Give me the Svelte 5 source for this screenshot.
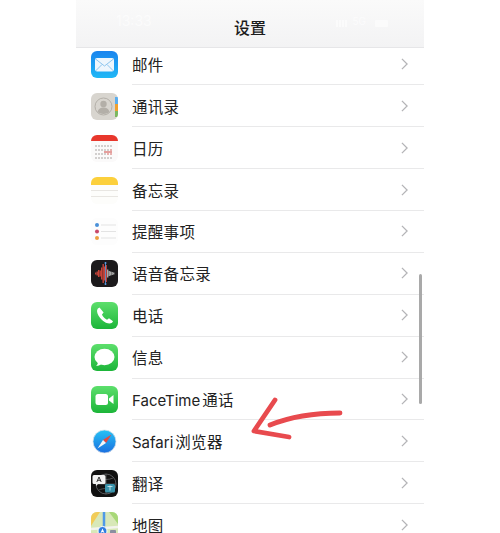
<script>
  const rows = [
    { icon: 'mail', label: '邮件' },
    { icon: 'contacts', label: '通讯录' },
    { icon: 'calendar', label: '日历' },
    { icon: 'notes', label: '备忘录' },
    { icon: 'reminders', label: '提醒事项' },
    { icon: 'voice', label: '语音备忘录' },
    { icon: 'phone', label: '电话' },
    { icon: 'messages', label: '信息' },
    { icon: 'facetime', latin: 'FaceTime', label: '通话' },
    { icon: 'safari', latin: 'Safari', label: '浏览器' },
    { icon: 'translate', label: '翻译' },
    { icon: 'maps', label: '地图' }
  ];

  // waveform bars for the voice memo icon
  const bars = [2, 4, 7, 6, 12, 19, 14, 17, 8, 5, 4, 3, 2];
  // dot grid for the calendar icon
  const dots = [];
  for (let y = 11; y <= 23; y += 4) {
    for (let x = 5; x <= 22; x += 3) dots.push({ x, y });
  }
</script>

<div class="phone">
  <header>
    <div class="status">
      <span class="time">13:33</span>
      <span class="signal">
        <i></i><i></i><i></i><i></i>
        <span class="net">5G</span>
        <span class="battery"></span>
      </span>
    </div>
    <h1>设置</h1>
  </header>

  <ul>
    {#each rows as row}
      <li>
        <svg class="icon" viewBox="0 0 27 27" width="27" height="27">
          <defs>
            <linearGradient id="blue" x1="0" y1="0" x2="0" y2="1">
              <stop offset="0" stop-color="#1a84ee" /><stop offset="1" stop-color="#20b8f6" />
            </linearGradient>
            <linearGradient id="green" x1="0" y1="0" x2="0" y2="1">
              <stop offset="0" stop-color="#5ddf6c" /><stop offset="1" stop-color="#1cb539" />
            </linearGradient>
            <linearGradient id="sky" x1="0" y1="0" x2="0" y2="1">
              <stop offset="0" stop-color="#27c2f5" /><stop offset="1" stop-color="#1a6fe0" />
            </linearGradient>
            <clipPath id="tile"><rect width="27" height="27" rx="6" /></clipPath>
          </defs>
          <g clip-path="url(#tile)">
            {#if row.icon === 'mail'}
              <rect width="27" height="27" fill="url(#blue)" />
              <rect x="4" y="7" width="19" height="13.5" rx="2" fill="#eef6fd" />
              <path d="M4.5 8l9 7 9-7M4.5 20l6.5-6.5M22.5 20L16 13.5" fill="none" stroke="#8cc4ee" stroke-width="1" />
            {:else if row.icon === 'contacts'}
              <rect width="27" height="27" fill="#d8d5cf" />
              <rect x="24" y="4" width="3" height="7" fill="#5aaef0" />
              <rect x="24" y="11" width="3" height="7" fill="#f0a030" />
              <rect x="24" y="18" width="3" height="6" fill="#7cb860" />
              <circle cx="12.5" cy="13.5" r="8.5" fill="none" stroke="#b3afa8" stroke-width="1" />
              <circle cx="12.5" cy="11" r="3.2" fill="#b3afa8" />
              <path d="M6.5 19c1-3.5 3.5-4.5 6-4.5s5 1 6 4.5c-3 2.5-9 2.5-12 0z" fill="#b3afa8" />
            {:else if row.icon === 'calendar'}
              <rect width="27" height="27" fill="#fbfafa" />
              <rect width="27" height="6" fill="#e8372c" />
              {#each dots as d, i}
                <circle cx={d.x} cy={d.y} r="0.7" fill={i === 11 || i === 16 || i === 17 ? '#c8302a' : '#8a8280'} />
              {/each}
              <path d="M13 17h8" stroke="#c8302a" stroke-width="0.9" />
            {:else if row.icon === 'notes'}
              <rect width="27" height="27" fill="#fdfdfb" />
              <rect width="27" height="8" fill="#fcd03c" />
              <path d="M0 13.5h27M0 19.5h27" stroke="#e2e0dc" stroke-width="0.8" />
            {:else if row.icon === 'reminders'}
              <rect width="27" height="27" fill="#fdfdfd" />
              <circle cx="6" cy="7" r="2" fill="#4a90d8" />
              <circle cx="6" cy="13.5" r="2" fill="#c8486a" />
              <circle cx="6" cy="20" r="2" fill="#eca040" />
              <path d="M10 7h15M10 13.5h15M10 20h15" stroke="#dcdcdc" stroke-width="0.8" />
            {:else if row.icon === 'voice'}
              <rect width="27" height="27" fill="#1c1a1c" />
              {#each bars as h, i}
                <rect x={4 + i * 1.5} y={13.5 - h / 2} width="1.4" height={h} fill={i < 8 ? '#c8443a' : '#a8a8a8'} />
              {/each}
              <path d="M14.5 2v23" stroke="#5a9ae0" stroke-width="0.8" />
              <circle cx="14.5" cy="3" r="1" fill="#5a9ae0" />
              <circle cx="14.5" cy="24" r="1" fill="#5a9ae0" />
            {:else if row.icon === 'phone'}
              <rect width="27" height="27" fill="url(#green)" />
              <path d="M8.5 5.5c-1 .3-2.5 1.5-2.5 3.5 0 3 2.5 6.5 5 9 2.5 2.5 5.5 3.5 7.5 3.5 1.5 0 3-1 3.5-2.3l-4-3-2 1.500c-1.800-.6-4.500-3.500-5-5.200l1.600-2z" fill="#fff" />
            {:else if row.icon === 'messages'}
              <rect width="27" height="27" fill="url(#green)" />
              <ellipse cx="13.5" cy="13" rx="10" ry="8.3" fill="#fff" />
              <path d="M7 18c0 1.500-.8 3-2 4 2 0 4-.8 5.500-2z" fill="#fff" />
            {:else if row.icon === 'facetime'}
              <rect width="27" height="27" fill="url(#green)" />
              <rect x="4.5" y="8" width="12.5" height="11" rx="2.5" fill="#fff" />
              <path d="M18 12.5l4.500-3.500v9l-4.500-3.500z" fill="#fff" />
            {:else if row.icon === 'safari'}
              <rect width="27" height="27" fill="#fff" />
              <circle cx="13.5" cy="13.5" r="11.5" fill="url(#sky)" stroke="#dfe3e8" stroke-width="0.8" />
              <path d="M20.5 6.500l-5.500 8.500-3-3z" fill="#e8483c" />
              <path d="M6.5 20.500l5.500-8.500 3 3z" fill="#f4f6f8" />
            {:else if row.icon === 'translate'}
              <rect width="27" height="27" fill="#111" />
              <circle cx="15" cy="14" r="10" fill="none" stroke="#77797c" stroke-width="0.7" />
              <path d="M15 4v20M5 14h20M8 8c4 2 10 2 14 0M8 20c4-2 10-2 14 0" fill="none" stroke="#77797c" stroke-width="0.6" />
              <path d="M3 5h10a1.500 1.500 0 0 1 1.500 1.500v6A1.500 1.500 0 0 1 13 14H7l-2 2v-2H3a1.500 1.500 0 0 1-1.500-1.500v-6A1.500 1.500 0 0 1 3 5z" fill="#f2f2f2" />
              <path d="M5.800 12l2.200-5 2.200 5M6.700 10.300h2.700" fill="none" stroke="#222" stroke-width="0.9" />
              <rect x="14" y="14" width="10" height="8.5" rx="1.5" fill="#3a93ab" />
              <path d="M16.500 16.500h5M19 15.500v5" stroke="#d8eef4" stroke-width="0.8" />
            {:else if row.icon === 'maps'}
              <rect width="27" height="27" fill="#d8e8b8" />
              <path d="M0 0h9L0 14z" fill="#f2cc58" />
              <path d="M27 0h-9l9 12z" fill="#a8d878" />
              <path d="M13 0v14L8 27" fill="none" stroke="#4f9ae8" stroke-width="2.5" />
              <path d="M0 17l27-2" fill="none" stroke="#f4f4ee" stroke-width="2.5" />
              <circle cx="11.5" cy="19" r="4.5" fill="#2f7de0" stroke="#fff" />
              <path d="M11.5 16.500l2 4.500-2-1-2 1z" fill="#fff" />
              <rect x="19" y="18" width="6" height="6" rx="1" fill="#8a8ea0" />
            {/if}
          </g>
        </svg>
        <div class="cell">
          <span class="label">
            {#if row.latin}<span class="latin">{row.latin}</span>{/if}{row.label}
          </span>
          <svg class="chevron" viewBox="0 0 8 14" width="7" height="12">
            <path d="M1 1l6 6-6 6" fill="none" stroke="#b4b4b7" stroke-width="1.5" />
          </svg>
        </div>
      </li>
    {/each}
  </ul>

  <div class="scrollbar"></div>
</div>

<svg class="arrow" viewBox="0 0 500 533" width="500" height="533">
  <path d="M275 400L254 431L289 437M270 425C290 417 315 413 340 413" fill="none" stroke="#e84a4e" stroke-width="4.8" stroke-linecap="round" stroke-linejoin="round" />
</svg>

<style>
  :global(body) {
    margin: 0;
    background: #fff;
  }

  .phone {
    position: relative;
    width: 348px;
    height: 533px;
    margin-left: 76px;
    overflow: hidden;
    background: #fff;
    font-family: Inter, "Noto Sans CJK SC", sans-serif;
    color: #222;
  }

  header {
    position: relative;
    z-index: 1;
    height: 47px;
    background: linear-gradient(#fafafa, #f3f3f4);
    border-bottom: 1px solid #e6e6e8;
  }

  .status {
    position: absolute;
    top: 12px;
    left: 40px;
    right: 36px;
    display: flex;
    justify-content: space-between;
    align-items: center;
    color: #fff;
    opacity: 0.6;
    font-size: 14px;
  }

  .signal {
    display: flex;
    align-items: flex-end;
    gap: 1px;
    font-size: 10px;
  }

  .signal i {
    width: 2px;
    height: 7px;
    background: #fff;
  }

  .net {
    margin: 0 8px 0 4px;
  }

  .battery {
    width: 13px;
    height: 7px;
    background: #fff;
    border-radius: 1px;
  }

  h1 {
    margin: 0;
    padding-top: 18px;
    text-align: center;
    font-size: 16px;
    line-height: 20px;
    font-weight: 500;
    color: #1c1c1c;
  }

  ul {
    list-style: none;
    margin: -4.6px 0 0;
    padding: 0;
  }

  li {
    display: flex;
    align-items: center;
    height: 41.9px;
    padding-left: 15px;
  }

  .icon {
    flex: none;
  }

  .cell {
    flex: 1;
    align-self: stretch;
    display: flex;
    align-items: center;
    justify-content: space-between;
    margin-left: 14px;
    padding-right: 16px;
    border-bottom: 1px solid #e9e9ea;
    box-sizing: border-box;
  }

  .label {
    font-size: 15.5px;
    letter-spacing: 0.3px;
  }

  .latin {
    font-size: 15px;
    letter-spacing: 0;
    margin-right: 2px;
  }

  .scrollbar {
    position: absolute;
    top: 274px;
    left: 343px;
    width: 3px;
    height: 130px;
    border-radius: 2px;
    background: #a9a9a9;
  }

  .arrow {
    position: absolute;
    top: 0;
    left: 0;
    pointer-events: none;
  }
</style>
